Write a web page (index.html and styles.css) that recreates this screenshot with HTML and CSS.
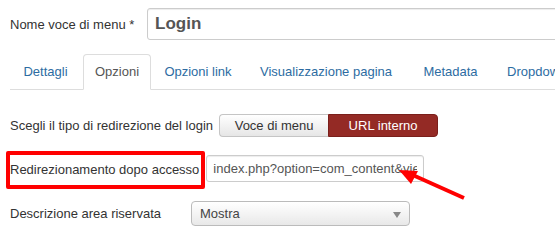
FILE: index.html
```html
<!DOCTYPE html>
<html lang="it">
  <head>
    <meta charset="UTF-8" />
    <title>Login - Opzioni</title>
    <link rel="stylesheet" href="styles.css">
  </head>
  <body>
    <div class="page">
      <div class="title-row">
        <label class="title-label">Nome voce di menu *</label>
        <input class="title-input" type="text" value="Login" />
      </div>

      <ul class="tabs">
        <li class="tab-1"><a>Dettagli</a></li>
        <li class="tab-2 active"><a>Opzioni</a></li>
        <li class="tab-3"><a>Opzioni link</a></li>
        <li class="tab-4"><a>Visualizzazione pagina</a></li>
        <li class="tab-5"><a>Metadata</a></li>
        <li class="tab-6"><a>Dropdown</a></li>
      </ul>

      <div class="row row-type">
        <label>Scegli il tipo di redirezione del login</label>
        <div class="btn-group">
          <span class="btn">Voce di menu</span>
          <span class="btn btn-on">URL interno</span>
        </div>
      </div>

      <div class="row row-url">
        <label class="marked">Redirezionamento dopo accesso</label>
        <input class="url-input" type="text" value="index.php?option=com_content&amp;view=article&amp;id=1" />
      </div>

      <div class="row row-desc">
        <label>Descrizione area riservata</label>
        <div class="select">Mostra<span class="caret"></span></div>
      </div>

      <svg class="arrow" width="80" height="40" viewBox="0 0 80 40">
        <line x1="72" y1="36" x2="14" y2="10" stroke="#ff0000" stroke-width="4" />
        <polygon points="7,8 26,9 19,22" fill="#ff0000" />
      </svg>
    </div>
  </body>
</html>
```

FILE: styles.css
```css
* {
  margin: 0;
  padding: 0;
  box-sizing: border-box;
}
html,
body {
  width: 100%;
  height: 100%;
  background: #fff;
  overflow: hidden;
}
body {
  font-family: "Liberation Sans", Arial, sans-serif;
  font-size: 13px;
  color: #333;
}
.page {
  position: relative;
  padding: 8px 0 0 10px;
}
.title-row {
  display: flex;
  align-items: center;
  height: 32px;
}
.title-label {
  flex: none;
  width: 137px;
}
.title-input {
  flex: none;
  width: 440px;
  height: 32px;
  border: 1px solid #ccc;
  border-radius: 3px;
  padding: 0 7px;
  font-family: "Liberation Sans", Arial, sans-serif;
  font-size: 17px;
  font-weight: bold;
  color: #555;
  box-shadow: inset 0 1px 1px rgba(0, 0, 0, 0.075);
  outline: none;
}
.tabs {
  display: flex;
  list-style: none;
  margin-top: 14px;
  width: 560px;
  border-bottom: 1px solid #ddd;
  white-space: nowrap;
}
.tabs li {
  flex: none;
  margin-right: 2px;
  margin-bottom: -1px;
}
.tabs a {
  display: block;
  padding: 8px 0;
  line-height: 18px;
  text-align: center;
  border: 1px solid transparent;
  border-radius: 4px 4px 0 0;
  color: #2d6ca2;
}
.tab-1 {
  width: 71px;
}
.tab-2 {
  width: 68px;
}
.tab-3 {
  width: 90px;
}
.tab-4 {
  width: 162px;
}
.tab-5 {
  width: 83px;
}
.tab-6 a {
  padding: 8px 12px;
}
.tabs .active a {
  color: #555;
  background: #fff;
  border-color: #ddd #ddd transparent;
}
.row {
  display: flex;
  align-items: center;
}
.row label {
  flex: none;
}
.row-type {
  margin-top: 24px;
  height: 23px;
}
.row-type label {
  margin-right: 6px;
}
.btn-group {
  display: flex;
}
.btn {
  display: block;
  height: 23px;
  line-height: 21px;
  padding: 0 14px;
  border: 1px solid #c5c5c5;
  border-right: none;
  border-radius: 4px 0 0 4px;
  background: linear-gradient(#ffffff, #e6e6e6);
  color: #333;
  font-size: 13px;
  width: 109px;
  text-align: center;
}
.btn-on {
  width: 110px;
  border: 1px solid #7a1f1b;
  border-radius: 0 4px 4px 0;
  background: #942a25;
  color: #fff;
}
.row-url {
  margin-top: 14px;
  margin-left: -4px;
}
.marked {
  display: block;
  height: 38px;
  line-height: 30px;
  border: 4px solid #ff0000;
  border-radius: 2px;
  padding: 0 2px 0 0;
  margin-right: 1px;
}
.url-input {
  flex: none;
  width: 218px;
  height: 27px;
  margin-top: -3px;
  border: 1px solid #ccc;
  border-radius: 3px;
  padding: 0 6px;
  font-family: "Liberation Sans", Arial, sans-serif;
  font-size: 13px;
  color: #555;
  outline: none;
  box-shadow: inset 0 1px 1px rgba(0, 0, 0, 0.075);
}
.row-desc {
  margin-top: 12px;
  height: 25px;
}
.row-desc label {
  width: 181px;
}
.select {
  position: relative;
  width: 219px;
  height: 25px;
  line-height: 23px;
  padding-left: 8px;
  border: 1px solid #bbb;
  border-radius: 4px;
  background: linear-gradient(#ffffff 0%, #f4f4f4 50%, #e8e8e8 100%);
  color: #444;
}
.caret {
  position: absolute;
  right: 8px;
  top: 10px;
  border-left: 4px solid transparent;
  border-right: 4px solid transparent;
  border-top: 6px solid #888;
}
.arrow {
  position: absolute;
  left: 392px;
  top: 162px;
}
```
